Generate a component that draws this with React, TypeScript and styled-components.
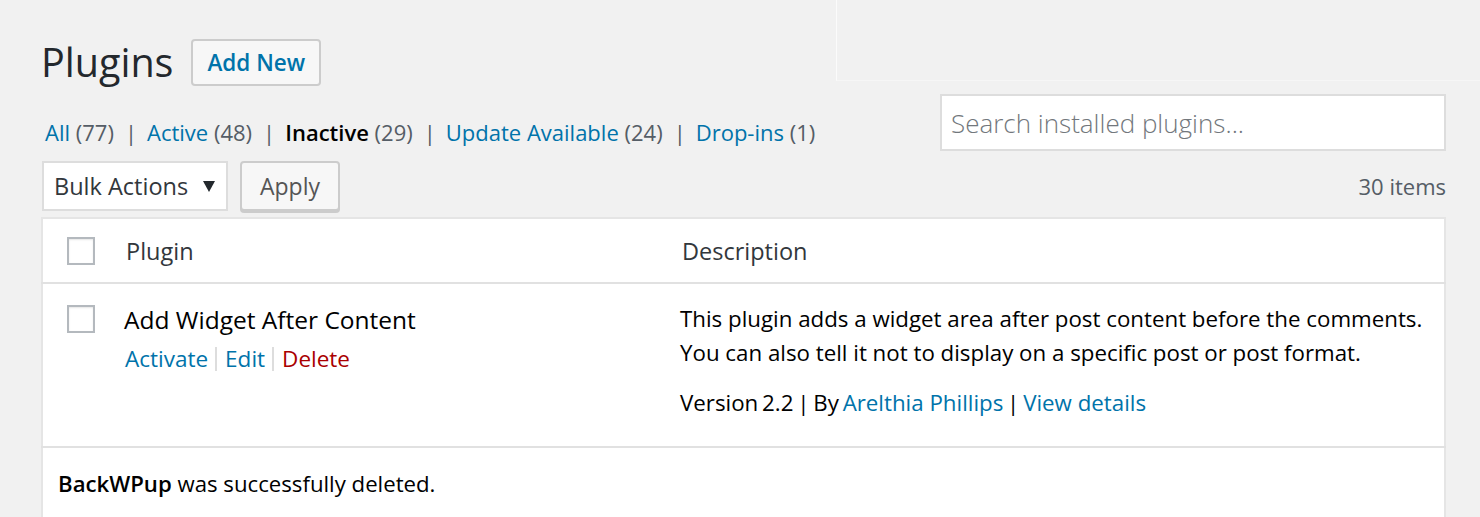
import React from 'react'
import styled, { createGlobalStyle } from 'styled-components'

const GlobalStyle = createGlobalStyle`
  html, body {
    margin: 0;
    padding: 0;
    background: #f1f1f1;
    font-family: 'Open Sans', 'Noto Sans', sans-serif;
    color: #23282d;
  }
`

const Page = styled.div`
  position: relative;
  height: 517px;
  overflow: hidden;
  padding: 0 34px 0 41px;
`

const ScreenMeta = styled.div`
  position: absolute;
  top: 0;
  right: 0;
  left: 836px;
  height: 80px;
  border-left: 1px solid #fbfbfb;
  border-bottom: 1px solid #f6f6f6;
`

const TitleRow = styled.div`
  display: flex;
  align-items: center;
  gap: 18px;
  padding-top: 39px;
  height: 46px;
`

const Title = styled.h1`
  margin: 0;
  font-size: 39.5px;
  font-weight: 400;
  line-height: 46px;
  color: #23282d;
`

const Button = styled.button<{ $primaryText?: boolean }>`
  font-family: inherit;
  height: ${p => (p.$primaryText ? 47 : 50)}px;
  padding: 0 ${p => (p.$primaryText ? 14 : 18)}px;
  font-size: ${p => (p.$primaryText ? 22.5 : 23)}px;
  font-weight: ${p => (p.$primaryText ? 600 : 400)};
  color: ${p => (p.$primaryText ? '#0073aa' : '#555')};
  background: #f7f7f7;
  border: 2px solid #ccc;
  border-radius: 4px;
  box-shadow: ${p => (p.$primaryText ? 'none' : '0 2px 0 #ccc')};
  cursor: pointer;
`

const FilterRow = styled.div`
  display: flex;
  justify-content: space-between;
  align-items: flex-start;
  margin-top: 9px;
`

const Filters = styled.ul`
  display: flex;
  list-style: none;
  margin: 22px 0 0 4px;
  padding: 0;
  font-size: 22px;
  line-height: 32px;
  color: #555d66;
`

const FilterItem = styled.li`
  white-space: pre;
`

const FilterLink = styled.a<{ $current?: boolean }>`
  color: ${p => (p.$current ? '#000' : '#0073aa')};
  font-weight: ${p => (p.$current ? 600 : 400)};
  text-decoration: none;
`

const Count = styled.span`
  color: #555d66;
`

const Pipe = styled.span`
  margin: 0 10px 0 11px;
  color: #555d66;
`

const Search = styled.input`
  width: 506px;
  height: 57px;
  box-sizing: border-box;
  padding: 0 9px;
  font-family: inherit;
  font-size: 26px;
  font-weight: 300;
  border: 2px solid #ddd;
  background: #fff;
  color: #32373c;
  outline: none;
  &::placeholder {
    color: #72777c;
  }
`

const TableNav = styled.div`
  display: flex;
  align-items: center;
  gap: 12px;
  margin-top: 10px;
  padding-left: 1px;
`

const Select = styled.div`
  display: flex;
  align-items: center;
  justify-content: space-between;
  width: 186px;
  height: 50px;
  box-sizing: border-box;
  padding: 0 10px 0 10px;
  background: #fff;
  border: 2px solid #ddd;
  font-size: 23.5px;
  color: #32373c;
`

const Caret = styled.span`
  width: 0;
  height: 0;
  margin-right: 1px;
  border-left: 6px solid transparent;
  border-right: 6px solid transparent;
  border-top: 11px solid #23282d;
`

const ItemCount = styled.div`
  margin-left: auto;
  font-size: 22px;
  color: #555d66;
`

const Table = styled.table`
  width: 100%;
  margin-top: 6px;
  border-collapse: collapse;
  background: #fff;
  border: 2px solid #e5e5e5;
  table-layout: fixed;
  font-size: 22px;
`

const HeadRow = styled.tr`
  height: 65px;
  border-bottom: 2px solid #e1e1e1;
`

const Th = styled.th`
  text-align: left;
  font-weight: 400;
  font-size: 23.5px;
  padding: 0 16px 0 17px;
  color: #32373c;
`

const CheckTh = styled.th`
  padding: 0;
`

const CheckCell = styled.td`
  vertical-align: top;
  padding: 21px 0 0 24px;
`

const Td = styled.td`
  vertical-align: top;
  padding: 18px 16px 0 16px;
`

const Checkbox = styled.span`
  display: block;
  width: 28px;
  height: 28px;
  box-sizing: border-box;
  border: 2px solid #b4b9be;
  background: #fff;
  box-shadow: inset 0 1px 2px rgba(0, 0, 0, 0.1);
`

const HeadCheck = styled(Checkbox)`
  margin-left: 24px;
`

const PluginRow = styled.tr`
  height: 164px;
  border-bottom: 2px solid #e1e1e1;
`

const PluginName = styled.div`
  margin-top: 1px;
  margin-left: -1px;
  font-size: 24.5px;
  line-height: 34px;
  color: #000;
`

const Actions = styled.div`
  display: flex;
  align-items: center;
  margin-top: 7px;
  font-size: 22.5px;
  line-height: 30px;
`

const ActionLink = styled.a<{ $danger?: boolean }>`
  color: ${p => (p.$danger ? '#a00' : '#0073aa')};
  text-decoration: none;
`

const ActionSep = styled.span`
  width: 2px;
  height: 24px;
  margin: 0 8px 0 7px;
  background: #ddd;
`

const Desc = styled.p`
  margin: 0 0 0 -1px;
  font-size: 22.3px;
  line-height: 34px;
  color: #000;
`

const Meta = styled.div`
  margin: 16px 0 0 -1px;
  font-size: 22.3px;
  line-height: 34px;
  color: #000;
  word-spacing: -2px;
`

const MetaLink = styled.a`
  color: #0073aa;
  text-decoration: none;
  word-spacing: 0;
`

const NoticeCell = styled.td`
  padding: 20px 17px 20px 15px;
  font-size: 22.2px;
  color: #000;
`

const NoticeStrong = styled.strong`
  font-weight: 600;
`

const filters = [
  { label: 'All', count: 77 },
  { label: 'Active', count: 48 },
  { label: 'Inactive', count: 29, current: true },
  { label: 'Update Available', count: 24 },
  { label: 'Drop-ins', count: 1 },
]

export default function App() {
  return (
    <>
      <GlobalStyle />
      <Page>
        <ScreenMeta />
        <TitleRow>
          <Title>Plugins</Title>
          <Button $primaryText>Add New</Button>
        </TitleRow>
        <FilterRow>
          <Filters>
            {filters.map((f, i) => (
              <FilterItem key={f.label}>
                <FilterLink href="#" $current={f.current}>
                  {f.label}
                </FilterLink>{' '}
                <Count>({f.count})</Count>
                {i < filters.length - 1 && <Pipe>|</Pipe>}
              </FilterItem>
            ))}
          </Filters>
          <Search placeholder="Search installed plugins..." />
        </FilterRow>
        <TableNav>
          <Select>
            Bulk Actions <Caret />
          </Select>
          <Button>Apply</Button>
          <ItemCount>30 items</ItemCount>
        </TableNav>
        <Table>
          <colgroup>
            <col style={{ width: 67 }} />
            <col style={{ width: 556 }} />
            <col />
          </colgroup>
          <thead>
            <HeadRow>
              <CheckTh>
                <HeadCheck />
              </CheckTh>
              <Th>Plugin</Th>
              <Th>Description</Th>
            </HeadRow>
          </thead>
          <tbody>
            <PluginRow>
              <CheckCell>
                <Checkbox />
              </CheckCell>
              <Td>
                <PluginName>Add Widget After Content</PluginName>
                <Actions>
                  <ActionLink href="#">Activate</ActionLink>
                  <ActionSep />
                  <ActionLink href="#">Edit</ActionLink>
                  <ActionSep />
                  <ActionLink href="#" $danger>
                    Delete
                  </ActionLink>
                </Actions>
              </Td>
              <Td>
                <Desc>
                  This plugin adds a widget area after post content before the comments.
                  <br />
                  You can also tell it not to display on a specific post or post format.
                </Desc>
                <Meta>
                  Version 2.2 | By <MetaLink href="#">Arelthia Phillips</MetaLink> |{' '}
                  <MetaLink href="#">View details</MetaLink>
                </Meta>
              </Td>
            </PluginRow>
            <tr>
              <NoticeCell colSpan={3}>
                <NoticeStrong>BackWPup</NoticeStrong> was successfully deleted.
              </NoticeCell>
            </tr>
          </tbody>
        </Table>
      </Page>
    </>
  )
}
